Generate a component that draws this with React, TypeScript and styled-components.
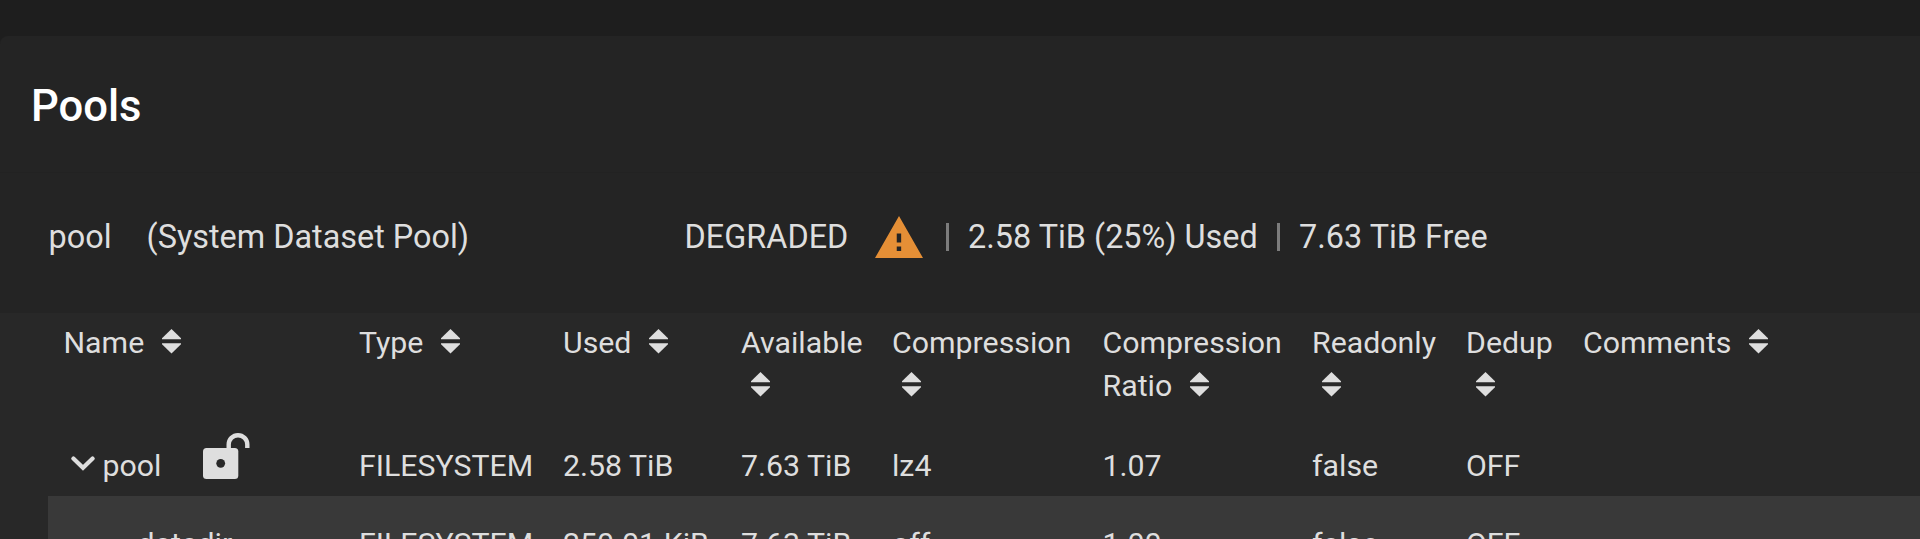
import React from "react";
import styled, { createGlobalStyle } from "styled-components";

const GlobalStyle = createGlobalStyle`
  body {
    margin: 0;
    background: #1e1e1e;
    font-family: Roboto, "Liberation Sans", sans-serif;
    color: #dedede;
    overflow: hidden;
  }
`;

const Page = styled.div`
  box-sizing: border-box;
  height: 539px;
  padding-top: 36px;
  overflow: hidden;
`;

const Card = styled.main`
  height: 503px;
  overflow: hidden;
  background: #242424;
  border-top-left-radius: 8px;
`;

const CardHeader = styled.header`
  box-sizing: border-box;
  height: 137px;
  padding: 45px 0 0 31px;
  border-bottom: 1px solid #222222;
`;

const Title = styled.h1`
  margin: 0;
  font-size: 43.6px;
  line-height: 52px;
  font-weight: 500;
  color: #ffffff;
`;

const PoolSummary = styled.section`
  box-sizing: border-box;
  display: flex;
  align-items: center;
  height: 140px;
  padding: 0 0 13px 48.6px;
  font-size: 32.4px;
  line-height: 40px;
  white-space: nowrap;
`;

const PoolName = styled.span`
  width: 98px;
`;

const PoolRole = styled.span`
  width: 538px;
`;

const PoolStatus = styled.span`
  width: 190px;
`;

const WarningIcon = styled.svg`
  width: 48px;
  height: 42px;
  margin-right: 23px;
`;

const Divider = styled.i`
  width: 3px;
  height: 28px;
  margin-top: 1px;
  background: #7c7c7c;
`;

const Usage = styled.span`
  box-sizing: border-box;
  width: 328px;
  padding-left: 19.5px;
`;

const Table = styled.section`
  height: 230px;
  background: #282828;
  font-size: 30.3px;
  white-space: nowrap;
`;

const Row = styled.div`
  display: grid;
  grid-template-columns: 295.5px 204px 178px 151px 210.5px 209.5px 154px 117px 1fr;
  padding-left: 63.5px;
`;

const HeadRow = styled(Row)`
  height: 116px;
  padding-top: 7px;
  line-height: 45px;
`;

const PoolRow = styled(Row)`
  height: 60px;
  line-height: 60px;
`;

const ChildRow = styled(Row)`
  height: 80px;
  margin-left: 48px;
  padding-left: 15.5px;
  background: #393939;
  line-height: 96px;
`;

const Heading = styled.div`
  display: flex;
  flex-wrap: wrap;
  align-content: flex-start;
`;

const HeadingLine = styled.div`
  display: flex;
  width: 100%;
  height: 43px;
`;

const SortArrows = styled.svg<{ $gap: number }>`
  width: 19px;
  height: 25px;
  margin: 9px 0 0 ${(p) => p.$gap}px;
`;

const NameCell = styled.div<{ $indent: number }>`
  display: flex;
  padding-left: ${(p) => p.$indent}px;
`;

const Chevron = styled.svg`
  width: 24px;
  height: 15px;
  margin: 20px 7.5px 0 0;
`;

const OpenLock = styled.svg`
  width: 47px;
  height: 46px;
  margin: -3px 0 0 42px;
`;

type Column = { lines: string[]; gap: number };

const columns: Column[] = [
  { lines: ["Name"], gap: 17.5 },
  { lines: ["Type"], gap: 17.5 },
  { lines: ["Used"], gap: 17.5 },
  { lines: ["Available", ""], gap: 10 },
  { lines: ["Compression", ""], gap: 10 },
  { lines: ["Compression", "Ratio"], gap: 17.5 },
  { lines: ["Readonly", ""], gap: 10 },
  { lines: ["Dedup", ""], gap: 10 },
  { lines: ["Comments"], gap: 17.5 },
];

const poolValues = ["FILESYSTEM", "2.58 TiB", "7.63 TiB", "lz4", "1.07", "false", "OFF"];
const childValues = ["FILESYSTEM", "250.01 KiB", "7.63 TiB", "off", "1.00", "false", "OFF"];

const Sort = ({ gap }: { gap: number }) => (
  <SortArrows $gap={gap} viewBox="0 0 19 25" fill="#dedede">
    <path d="M9.5 0 19 9.2V10.3H0V9.2Z" />
    <path d="M0 14.2H19V15.3L9.5 24.5 0 15.3Z" />
  </SortArrows>
);

export default function App() {
  return (
    <Page>
      <GlobalStyle />
      <Card>
        <CardHeader>
          <Title>Pools</Title>
        </CardHeader>
        <PoolSummary>
          <PoolName>pool</PoolName>
          <PoolRole>(System Dataset Pool)</PoolRole>
          <PoolStatus>DEGRADED</PoolStatus>
          <WarningIcon viewBox="0 0 49 42" preserveAspectRatio="none">
            <path
              fill="#e58f36"
              fillRule="evenodd"
              d="M24.5 0 49 42H0ZM22.2 17.5V26.5H26.7V17.5ZM22.2 30.5V35H26.7V30.5Z"
            />
          </WarningIcon>
          <Divider />
          <Usage>2.58 TiB (25%) Used</Usage>
          <Divider />
          <Usage>7.63 TiB Free</Usage>
        </PoolSummary>
        <Table>
          <HeadRow>
            {columns.map((column, i) => (
              <Heading key={i}>
                {column.lines.map((line, n) => (
                  <HeadingLine key={n}>
                    {line}
                    {n === column.lines.length - 1 && <Sort gap={column.gap} />}
                  </HeadingLine>
                ))}
              </Heading>
            ))}
          </HeadRow>
          <PoolRow>
            <NameCell $indent={7.5}>
              <Chevron viewBox="0 0 24 15">
                <path
                  d="M2.4 2.6 12 11.8 21.6 2.6"
                  fill="none"
                  stroke="#dedede"
                  strokeWidth="4.2"
                  strokeLinecap="round"
                />
              </Chevron>
              pool
              <OpenLock viewBox="0 0 47 46">
                <rect x="0" y="15" width="35.3" height="31" rx="3.5" fill="#dedede" />
                <path
                  d="M25.7 16V11.5A9.3 9.3 0 0 1 44.3 11.5V15"
                  fill="none"
                  stroke="#dedede"
                  strokeWidth="4.4"
                />
                <circle cx="17.7" cy="30.3" r="4.4" fill="#282828" />
              </OpenLock>
            </NameCell>
            {poolValues.map((value, i) => (
              <span key={i}>{value}</span>
            ))}
          </PoolRow>
          <ChildRow>
            <NameCell $indent={74}>datadir</NameCell>
            {childValues.map((value, i) => (
              <span key={i}>{value}</span>
            ))}
          </ChildRow>
        </Table>
      </Card>
    </Page>
  );
}
